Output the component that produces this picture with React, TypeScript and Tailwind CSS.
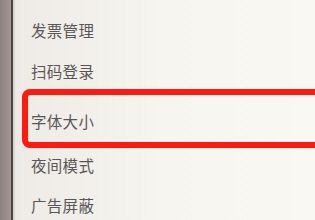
import React from "react";

const font = { fontFamily: '"Noto Sans CJK SC", "Noto Sans", sans-serif' };

function Row({ label, h }: { label: string; h: string }) {
  return (
    <div className={`flex shrink-0 items-center pl-[16px] ${h}`}>
      <span className="text-[15.5px] leading-[20px] tracking-[0.3px] text-[#595756]">{label}</span>
    </div>
  );
}

export default function App() {
  return (
    <div className="flex h-[220px] w-[315px] overflow-hidden" style={font}>
      <div className="w-[11px] shrink-0 bg-gradient-to-r from-[#8c8381] to-[#a19894]" />
      <div className="w-[2px] shrink-0 bg-[#4a4443]" />
      <div className="w-[2px] shrink-0 bg-[#d8d4cf]" />
      <div className="flex min-w-0 flex-1 flex-col bg-gradient-to-r from-[#eeebe6] via-[#f7f5f0] to-[#faf8f3] pt-[9px]">
        <Row label="发票管理" h="h-[42px]" />
        <Row label="扫码登录" h="h-[40px]" />
        <div className="-mt-[2px] ml-[7px] -mr-[20px] h-[59px] shrink-0 rounded-[8px] border-[6px] border-[#ff1a10]">
          <div className="flex h-full items-center pl-[3px] pt-[5px]">
            <span className="text-[15.5px] leading-[20px] tracking-[0.3px] text-[#595756]">字体大小</span>
          </div>
        </div>
        <Row label="夜间模式" h="h-[34px]" />
        <Row label="广告屏蔽" h="h-[46px]" />
      </div>
    </div>
  );
}
